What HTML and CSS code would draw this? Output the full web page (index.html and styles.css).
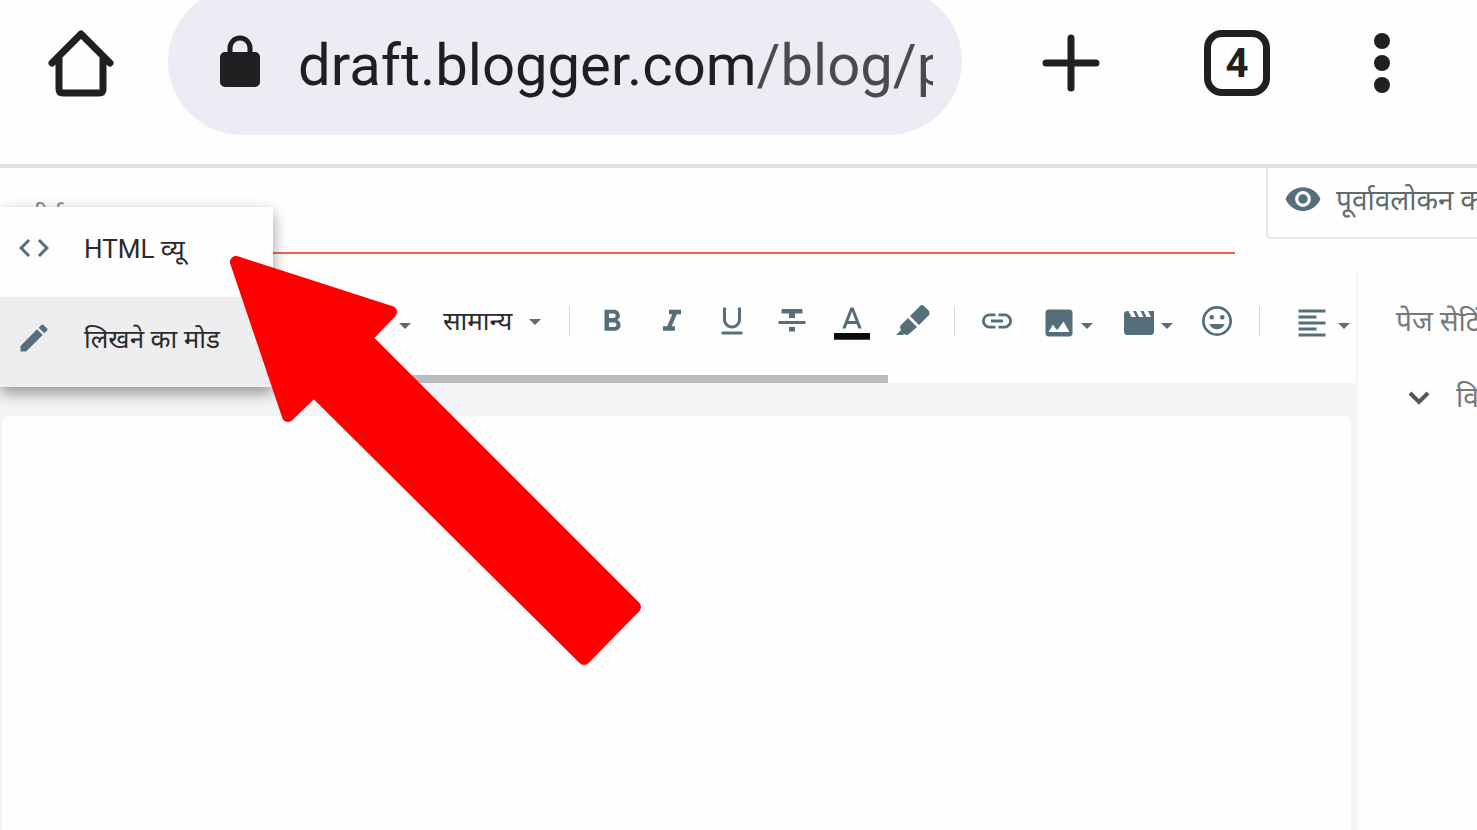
FILE: index.html
```html
<!DOCTYPE html>
<html lang="hi">
<head>
  <meta charset="UTF-8">
  <meta name="viewport" content="width=device-width, initial-scale=1">
  <title>Blogger</title>
  <link rel="stylesheet" href="styles.css">
  <link rel="icon" href="data:,">
</head>
<body>
  <!-- browser bar -->
  <header class="browser-bar">
    <button class="home" aria-label="Home">
      <svg width="66" height="68" viewBox="0 0 66 68" fill="none" stroke="#202022" stroke-width="7" stroke-linecap="round" stroke-linejoin="round">
        <path d="M4 34 33 5l29 29M11 29v31q0 4 4 4h36q4 0 4-4V29"/>
      </svg>
    </button>
    <div class="omnibox">
      <svg width="40" height="52" viewBox="0 0 40 52">
        <rect y="17" width="40" height="35" rx="5" fill="#1f1f22"/>
        <path d="M10 20v-7a10 10 0 0 1 20 0v7" fill="none" stroke="#1f1f22" stroke-width="5"/>
      </svg>
      <input class="url" type="text" aria-label="URL" value="draft.blogger.com/blog/page">
    </div>
    <button class="new-tab" aria-label="New tab">
      <svg width="58" height="58" viewBox="0 0 58 58" stroke="#202022" stroke-width="7" stroke-linecap="round"><path d="M4 29h50M29 4v50"/></svg>
    </button>
    <button class="tabs">4</button>
    <button class="more" aria-label="More">
      <svg width="16" height="60" viewBox="0 0 16 60" fill="#202022"><circle cx="8" cy="8" r="8"/><circle cx="8" cy="30" r="8"/><circle cx="8" cy="52" r="8"/></svg>
    </button>
  </header>

  <div class="title-row">
    <input class="title" type="text" placeholder="शीर्षक" aria-label="शीर्षक">
    <button class="preview">
      <svg class="icon" viewBox="0 0 24 24"><path d="M12 4.5C7 4.5 2.73 7.61 1 12c1.73 4.39 6 7.5 11 7.5s9.27-3.11 11-7.5c-1.73-4.39-6-7.5-11-7.5zM12 17a5 5 0 1 1 0-10 5 5 0 0 1 0 10zm0-8a3 3 0 1 0 0 6 3 3 0 0 0 0-6z"/></svg>
      <span>पूर्वावलोकन करें</span>
    </button>
  </div>

  <div class="workspace">
    <main class="editor">
      <div class="toolbar">
        <button class="tool size" aria-label="Font size">
          <svg class="icon" viewBox="0 0 24 24"><path d="M9 4v3h5v12h3V7h5V4H9zm-6 8h3v7h3v-7h3V9H3v3z"/></svg>
          <svg class="caret" viewBox="0 0 12 6"><path d="M0 0h12L6 6z"/></svg>
        </button>
        <div class="format">
          <select aria-label="Format"><option>सामान्य</option></select>
          <svg class="caret" viewBox="0 0 12 6"><path d="M0 0h12L6 6z"/></svg>
        </div>
        <span class="sep"></span>
        <button class="tool" aria-label="Bold">
          <svg class="icon" viewBox="0 0 24 24"><path d="M15.6 11.29c.97-.67 1.65-1.77 1.65-2.79 0-2.26-1.75-4-4-4H7v14h7.04c2.09 0 3.71-1.7 3.71-3.79 0-1.52-.86-2.82-2.15-3.42zM10 7h3a1.5 1.5 0 0 1 0 3h-3V7zm3.5 9H10v-3h3.5a1.5 1.5 0 0 1 0 3z"/></svg>
        </button>
        <button class="tool" aria-label="Italic">
          <svg class="icon" viewBox="0 0 24 24"><path d="M10 4.5v3h2.21l-3.42 8H6v3h8v-3h-2.21l3.42-8H18v-3z"/></svg>
        </button>
        <button class="tool" aria-label="Underline">
          <svg class="icon" viewBox="0 0 24 24"><path d="M12 17c3.31 0 6-2.69 6-6V3h-2v8c0 2.2-1.8 4-4 4s-4-1.8-4-4V3H6v8c0 3.31 2.69 6 6 6zm-7 2v2h14v-2H5z"/></svg>
        </button>
        <button class="tool" aria-label="Strikethrough">
          <svg class="icon" viewBox="0 0 24 24"><path d="M10 19h4v-3h-4v3zM5 4v3h5v3h4V7h5V4H5zM3 14h18v-2H3v2z"/></svg>
        </button>
        <button class="tool text-color" aria-label="Text color">
          <svg class="icon" viewBox="0 0 24 24"><path d="M11 3 5.500 17h2.250l1.120-3h6.250l1.120 3h2.250L13 3h-2zm-1.380 9L12 5.670 14.380 12H9.620z"/><path fill="#0c0c0c" d="M0 20h24v4.500H0z"/></svg>
        </button>
        <button class="tool" aria-label="Highlight">
          <svg class="icon" viewBox="0 0 36 36"><path d="M2 32 7 27Q5 24 7 22L14 15 23 24 15 31Q13 33 10 31L9 32ZM16 13 26 3Q28 1 30 3L35 8Q36 10 35 12L25 22Z"/></svg>
        </button>
        <span class="sep"></span>
        <button class="tool" aria-label="Link">
          <svg class="icon" viewBox="0 0 24 24"><path d="M3.900 12c0-1.710 1.390-3.100 3.100-3.100h4V7H7a5 5 0 0 0 0 10h4v-1.900H7c-1.710 0-3.100-1.390-3.100-3.100zM8 13h8v-2H8v2zm9-6h-4v1.900h4a3.100 3.100 0 0 1 0 6.200h-4V17h4a5 5 0 0 0 0-10z"/></svg>
        </button>
        <button class="tool drop" aria-label="Image">
          <svg class="icon" viewBox="0 0 24 24"><path d="M21 19V5c0-1.100-.9-2-2-2H5c-1.100 0-2 .9-2 2v14c0 1.100.9 2 2 2h14c1.100 0 2-.9 2-2zM5 18l3-5 2 3 1 .5 4-5.500 4 7z"/></svg>
          <svg class="caret" viewBox="0 0 12 6"><path d="M0 0h12L6 6z"/></svg>
        </button>
        <button class="tool drop" aria-label="Video">
          <svg class="icon" viewBox="0 0 24 24"><path d="m18 4 2 4h-3l-2-4h-2l2 4h-3l-2-4H8l2 4H7L5 4H4c-1.100 0-2 .9-2 2v12c0 1.100.9 2 2 2h16c1.100 0 2-.9 2-2V4h-4z"/></svg>
          <svg class="caret" viewBox="0 0 12 6"><path d="M0 0h12L6 6z"/></svg>
        </button>
        <button class="tool" aria-label="Emoji">
          <svg class="icon" viewBox="0 0 24 24"><path d="M12 2a10 10 0 1 0 0 20 10 10 0 0 0 0-20zm0 18.200a8.200 8.200 0 1 1 0-16.400 8.200 8.200 0 0 1 0 16.400z"/><circle cx="8.500" cy="9.500" r="1.500"/><circle cx="15.500" cy="9.500" r="1.500"/><path d="M12 17.500c2.330 0 4.310-1.460 5.110-3.500H6.890c.8 2.040 2.780 3.500 5.110 3.500z"/></svg>
        </button>
        <span class="sep"></span>
        <button class="tool drop align" aria-label="Align">
          <svg class="icon" viewBox="0 0 24 24"><path d="M15 15H3v2h12zM15 7H3v2h12zM3 13h18v-2H3zM3 21h18v-2H3zM3 3v2h18V3z"/></svg>
          <svg class="caret" viewBox="0 0 12 6"><path d="M0 0h12L6 6z"/></svg>
        </button>
      </div>
      <div class="scrollbar"></div>
      <div class="canvas"><div class="paper"></div></div>
    </main>
    <aside class="settings">
      <h2>पेज सेटिंग</h2>
      <button class="section">
        <svg width="22" height="14" viewBox="0 0 22 14" fill="none" stroke="#55565b" stroke-width="4"><path d="m2 2 9 9 9-9"/></svg>
        <span>विकल्प</span>
      </button>
    </aside>
  </div>

  <!-- view mode menu -->
  <div class="mode-menu">
    <button class="mode">
      <svg class="icon" viewBox="0 0 24 24"><path d="M9.400 16.600 4.800 12l4.600-4.600L8 6l-6 6 6 6 1.400-1.400zm5.200 0 4.600-4.600-4.600-4.600L16 6l6 6-6 6-1.400-1.400z"/></svg>
      <span>HTML व्यू</span>
    </button>
    <button class="mode active">
      <svg class="icon" viewBox="0 0 24 24"><path d="M3 17.250V21h3.750L17.810 9.940l-3.750-3.750L3 17.250zM20.710 7.040a1 1 0 0 0 0-1.410l-2.340-2.340a1 1 0 0 0-1.410 0l-1.830 1.830 3.750 3.750 1.830-1.830z"/></svg>
      <span>लिखने का मोड</span>
    </button>
  </div>

  <svg class="pointer" width="412" height="410" viewBox="230 256 412 410">
    <path d="M236 262 391 312 366 338 635 607 584 659 314 391 288 416Z" fill="#f00" stroke="#f00" stroke-width="12" stroke-linejoin="round"/>
  </svg>
</body>
</html>
```

FILE: styles.css
```css
* {box-sizing:border-box;}
body {margin:0; min-height:100vh; display:flex; flex-direction:column; position:relative; overflow:hidden; background:#fefefe; color:#2b2b2d; font-family:Roboto, "Noto Sans", "Noto Sans Devanagari", sans-serif; font-size:26px;}
button, input, select {font:inherit; color:inherit; border:none; background:none; padding:0; margin:0; outline:none;}
button {display:flex; align-items:center; flex:none; cursor:pointer;}
svg {display:block; flex:none;}
.icon {width:36px; height:36px; fill:#546e7a;}
.caret {width:12px; height:6px; fill:#5c6b72;}

/* Browser bar */
.browser-bar {display:flex; align-items:center; height:168px; padding:0 87px 38px 48px; border-bottom:4px solid #e2e2e5;}
.omnibox {flex:1; min-width:0; height:148px; margin:-4px 80px 0 54px; padding:0 29px 0 52px; display:flex; align-items:center; gap:38px; border-radius:74px; background:#edebf3;}
/* domain is dark, the path after it is lighter */
.url {flex:1; min-width:0; height:90px; padding-top:8px; font-size:58px; background:linear-gradient(to right, #1f1f22 458px, #4a494f 458px); background-clip:text; -webkit-background-clip:text; -webkit-text-fill-color:transparent;}
.tabs {width:66px; height:66px; margin:0 104px; justify-content:center; border:7px solid #202022; border-radius:18px; font-size:40px; font-weight:bold; color:#202022;}

/* Title and preview */
.title-row {display:flex; height:86px;}
.title {flex:1; min-width:0; margin-right:31px; padding:12px 24px 0; border-bottom:2px solid #e8694a;}
.title::placeholder {color:#8a8a8e; opacity:1;}
.preview {width:211px; height:71px; padding:0 0 8px 16px; gap:14px; border:2px solid #e6e6ea; border-width:0 0 2px 2px; border-radius:0 0 0 4px; font-size:28px; color:#5f6b70; white-space:nowrap; overflow:hidden;}
.preview .icon {width:38px; height:38px;}

/* Editor */
.workspace {flex:1; display:flex;}
.editor {flex:1; min-width:0; display:flex; flex-direction:column;}
.toolbar {display:flex; align-items:center; height:121px; padding:12px 0 0 352px; overflow:hidden;}
.tool {width:60px; height:60px; justify-content:center;}
.tool.size {gap:10px;}
.tool.drop {width:80px; gap:4px;}
.tool.drop .icon {margin-top:4px;}
.tool .caret {margin-top:10px;}
.tool.align {width:100px; gap:8px;}
.text-color .icon {overflow:visible;}
.format {position:relative; width:98px; margin:0 16px 0 31px;}
.format select {width:98px; height:60px; appearance:none; font-size:26px; cursor:pointer;}
.format .caret {position:absolute; right:0; top:28px; pointer-events:none;}
.sep {flex:none; width:1px; height:30px; margin:0 12px; background:#d4d6d9;}
.scrollbar {width:calc(100% - 468px); height:8px; background:#bdbbbf;}
.canvas {flex:1; display:flex; padding:33px 5px 0 2px; background:#f4f3f6;}
.paper {flex:1; border-radius:8px 8px 0 0; background:#fefefe;}

/* Page settings */
.settings {width:121px; padding:32px 0 0 38px; margin-top:16px; border-left:2px solid #f6f4f8; color:#77787c; white-space:nowrap; overflow:hidden;}
.settings h2 {margin:0 0 36px; font-size:28px; font-weight:normal; line-height:40px;}
.section {gap:26px; margin-left:12px; font-size:28px; line-height:40px;}

/* Mode menu */
.mode-menu {position:absolute; top:207px; left:0; width:273px; background:#fefefe; box-shadow:0 6px 14px rgba(0,0,0,.4);}
.mode {width:100%; height:90px; padding:0 16px 8px; gap:32px; white-space:nowrap;}
.mode.active {background:#eeeef0;}

.pointer {position:absolute; top:256px; left:230px; pointer-events:none;}
```
